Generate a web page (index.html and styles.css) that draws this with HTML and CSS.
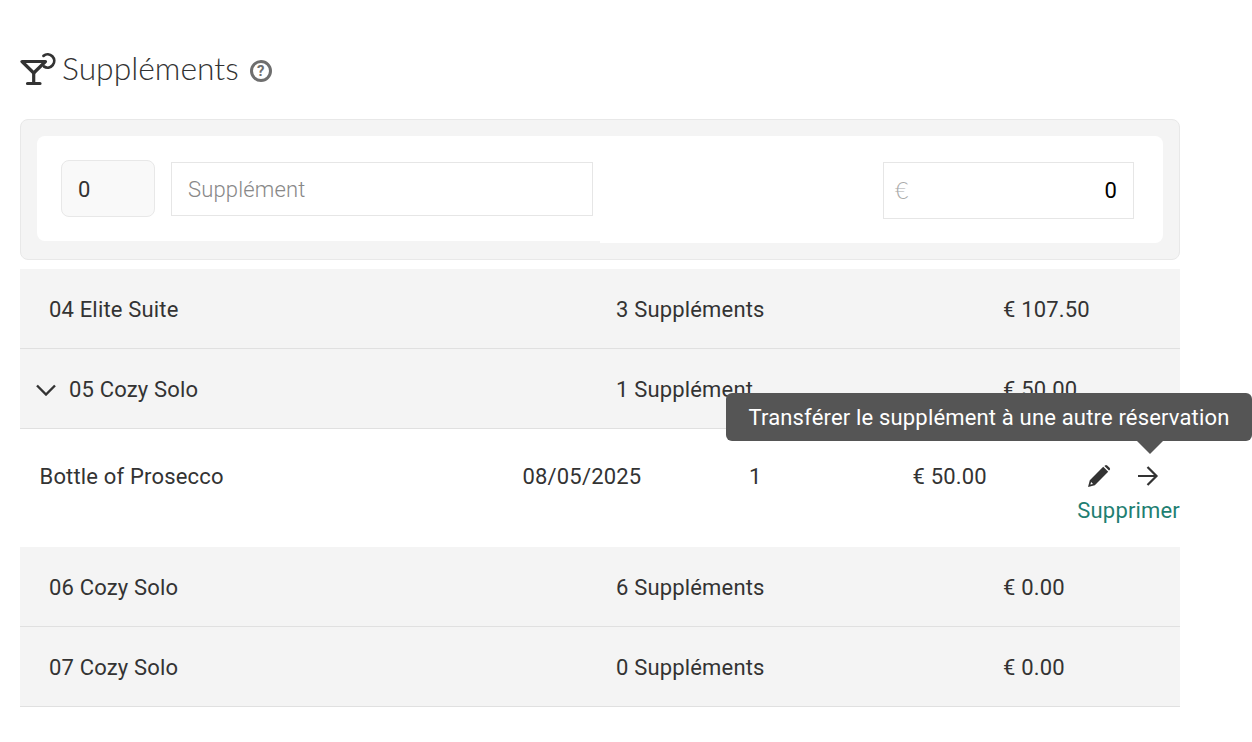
FILE: index.html
```html
<!DOCTYPE html>
<html lang="fr">
<head>
  <meta charset="UTF-8">
  <meta name="viewport" content="width=device-width, initial-scale=1.0">
  <title>Suppléments</title>
  <link rel="stylesheet" href="styles.css">
</head>
<body>

<div class="container">
  <h2 class="title">
    <svg class="title-icon" width="36" height="34" viewBox="0 0 36 34" fill="none" stroke="#333" stroke-width="3.2">
      <path d="M2 9.5H25.5L13.7 21Z" stroke-linejoin="round"/>
      <path d="M13.7 21V31M7.5 31.5H20" stroke-linecap="round"/>
      <path d="M23.5 3.8A6.6 6.6 0 1 1 24 14.5" stroke-width="2.8" stroke-linecap="round"/>
    </svg>
    <span>Suppléments</span>
    <span class="help">?</span>
  </h2>

  <div class="add-panel">
    <div class="add-left">
      <div class="qty">0</div>
      <div class="name-input">Supplément</div>
    </div>
    <div class="add-right">
      <div class="price-input"><span class="euro">€</span><span class="price-val">0</span></div>
    </div>
  </div>

  <div class="room-row">
    <div>04 Elite Suite</div>
    <div>3 Suppléments</div>
    <div>€ 107.50</div>
  </div>
  <div class="room-row">
    <div class="room-open">
      <svg width="20" height="12" viewBox="0 0 20 12" fill="none" stroke="#333" stroke-width="2.4"><path d="M1 1.5L10 10.5L19 1.5"/></svg>
      05 Cozy Solo
    </div>
    <div>1 Supplément</div>
    <div>€ 50.00</div>
  </div>

  <div class="item-row">
    <div>Bottle of Prosecco</div>
    <div>08/05/2025</div>
    <div>1</div>
    <div>€ 50.00</div>
    <div class="actions">
      <div class="action-icons">
        <svg width="24" height="24" viewBox="0 0 24 24" fill="#333"><path d="M1 23L2.8 16.2L16.2 2.8L21.2 7.8L7.8 21.2ZM3.4 20.6L6 20L4.2 18ZM18 1.4Q19 .4 20.2 1.4L22.6 3.8Q23.6 5 22.6 6L22 6.6L17.4 2Z" fill-rule="evenodd"/></svg>
        <svg width="22" height="20" viewBox="0 0 22 20" fill="none" stroke="#333" stroke-width="2.2"><path d="M1 10H19.5M10.5 1L19.5 10L10.5 19"/></svg>
      </div>
      <a class="remove">Supprimer</a>
    </div>
    <div class="tooltip">Transférer le supplément à une autre réservation</div>
  </div>

  <div class="room-row">
    <div>06 Cozy Solo</div>
    <div>6 Suppléments</div>
    <div>€ 0.00</div>
  </div>
  <div class="room-row">
    <div>07 Cozy Solo</div>
    <div>0 Suppléments</div>
    <div>€ 0.00</div>
  </div>
</div>

</body>
</html>
```

FILE: styles.css
```css
html, body {
  overflow: hidden;
}
body {
  font-family: 'Roboto', Arial, sans-serif;
  font-size: 22px;
  letter-spacing: 0.17px;
  color: #333;
  background: #fff;
  margin: 0;
  padding: 52px 0 0 20px;
}
.container {
  width: 1160px;
  position: relative;
}
.title {
  display: flex;
  align-items: center;
  height: 34px;
  margin: 0 0 33px;
  font-family: 'Lato', Arial, sans-serif;
  font-weight: 300;
  font-size: 31.8px;
  letter-spacing: 0;
  line-height: 30px;
  color: #333;
}
.title-icon {
  margin-right: 7px;
}
.title span:first-of-type {
  margin: -2px 0 0 -1px;
}
.help {
  display: flex;
  align-items: center;
  justify-content: center;
  width: 22px;
  height: 22px;
  box-sizing: border-box;
  margin: 4px 0 0 11px;
  border: 3px solid #6e6e6e;
  border-radius: 50%;
  font-family: 'Roboto', Arial, sans-serif;
  font-weight: 700;
  font-size: 15px;
  line-height: 16px;
  letter-spacing: 0;
  color: #6e6e6e;
}
.add-panel {
  display: flex;
  align-items: flex-start;
  height: 141px;
  box-sizing: border-box;
  padding: 16px;
  margin-bottom: 9px;
  background: #f4f4f4;
  border: 1px solid #e8e8e8;
  border-radius: 8px;
}
.add-left {
  display: flex;
  align-items: center;
  gap: 16px;
  width: 563px;
  height: 105px;
  box-sizing: border-box;
  padding: 0 7px 0 24px;
  background: #fff;
  border-radius: 8px 0 0 8px;
}
.add-right {
  display: flex;
  justify-content: flex-end;
  align-items: center;
  width: 563px;
  height: 107px;
  box-sizing: border-box;
  padding: 2px 29px 0 0;
  background: #fff;
  border-radius: 0 8px 8px 0;
}
.qty {
  width: 94px;
  height: 57px;
  box-sizing: border-box;
  padding-left: 16px;
  line-height: 57px;
  background: #f9f9f9;
  border: 1px solid #e8e8e8;
  border-radius: 8px;
  flex: none;
}
.name-input {
  flex: 1;
  height: 54px;
  box-sizing: border-box;
  padding-left: 16px;
  line-height: 53px;
  border: 1px solid #e6e6e6;
  color: #888;
  font-weight: 300;
}
.price-input {
  display: flex;
  justify-content: space-between;
  width: 251px;
  height: 57px;
  box-sizing: border-box;
  padding: 0 16px 0 11px;
  line-height: 54px;
  border: 1px solid #e6e6e6;
}
.euro {
  font-family: 'Lato', Arial, sans-serif;
  font-size: 23px;
  color: #aaa;
  font-weight: 300;
}
.price-val {
  color: #000;
  line-height: 56px;
}
.room-row {
  display: grid;
  grid-template-columns: 567px 387px 1fr;
  align-items: center;
  height: 80px;
  box-sizing: border-box;
  padding: 2px 0 0 29px;
  background: #f4f4f4;
  border-bottom: 1px solid #e0e0e0;
}
.room-open {
  display: flex;
  align-items: center;
  gap: 13px;
  margin-left: -13px;
}
.item-row {
  display: grid;
  grid-template-columns: 483px 226.5px 163.5px 165px 1fr;
  height: 118px;
  box-sizing: border-box;
  padding: 35px 0 0 19.5px;
  position: relative;
}
.actions {
  display: flex;
  flex-direction: column;
  align-items: flex-end;
  margin-left: -60px;
}
.action-icons {
  display: flex;
  align-items: center;
  gap: 26px;
  height: 24px;
  margin-right: 21px;
}
.remove {
  margin-top: 10px;
  color: #1f7f72;
}
.tooltip {
  position: absolute;
  top: -36px;
  left: 706px;
  width: 526px;
  height: 48px;
  box-sizing: border-box;
  text-align: center;
  line-height: 50px;
  color: #fff;
  background: #555;
  border-radius: 6px;
}
.tooltip::after {
  content: "";
  position: absolute;
  left: 411px;
  top: 48px;
  border: 13px solid transparent;
  border-top-color: #555;
  border-bottom: 0;
}
```
